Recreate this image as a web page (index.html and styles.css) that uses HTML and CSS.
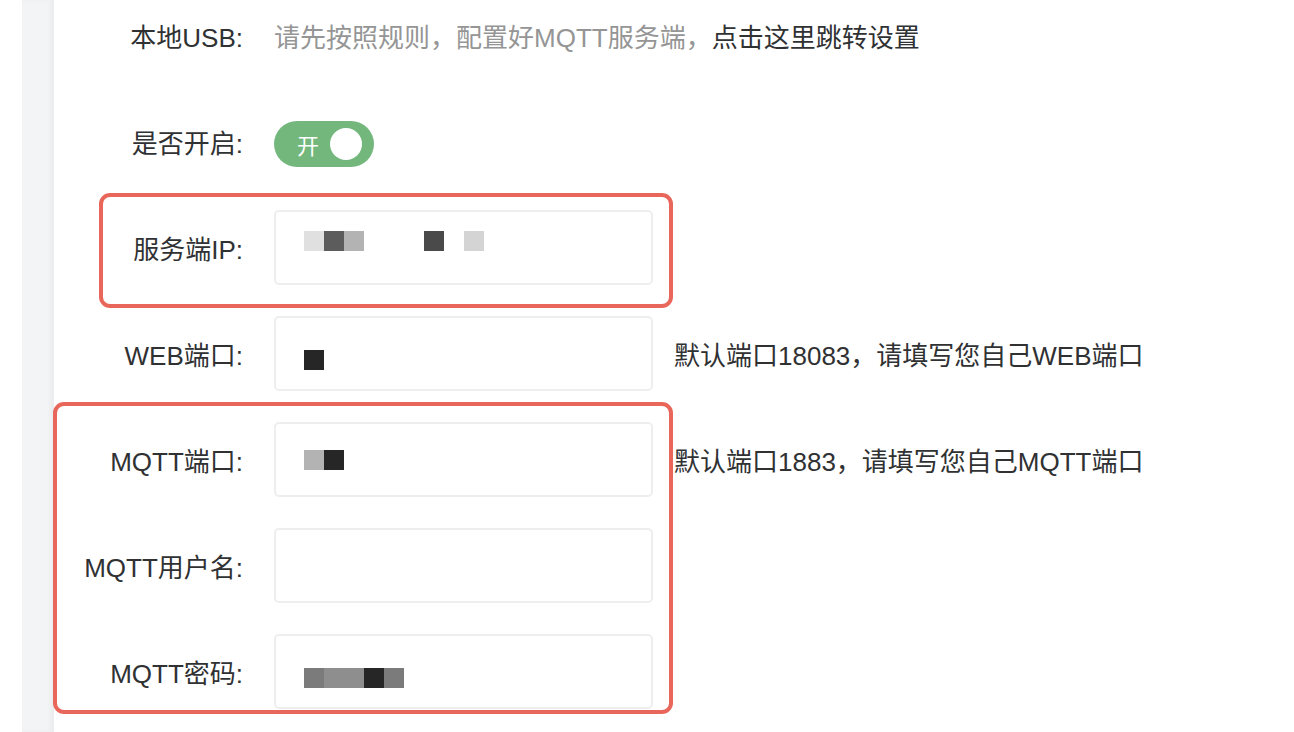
FILE: index.html
```html
<!DOCTYPE html>
<html lang="zh-CN">
<head>
    <meta charset="UTF-8">
    <meta name="viewport" content="width=device-width, initial-scale=1.0">
    <title>MQTT 设置</title>
    <link rel="stylesheet" href="styles.css">
</head>
<body>
    <div class="page">
        <div class="side"></div>
        <div class="form">
            <div class="row">
                <div class="label">本地USB:</div>
                <div class="value tip">请先按照规则，配置好MQTT服务端，<a class="jump" href="#">点击这里跳转设置</a></div>
            </div>
            <div class="row">
                <div class="label">是否开启:</div>
                <div class="value">
                    <div class="switch"><span>开</span><span class="knob"></span></div>
                </div>
            </div>
            <div class="row">
                <div class="label">服务端IP:</div>
                <div class="value">
                    <div class="field ip">
                        <span class="px c1"></span><span class="px c4"></span><span class="px c3"></span>
                        <span class="px c5 far"></span><span class="px c2 near"></span>
                    </div>
                </div>
            </div>
            <div class="row">
                <div class="label">WEB端口:</div>
                <div class="value">
                    <div class="field low"><span class="px c6"></span></div>
                </div>
                <div class="hint">默认端口18083，请填写您自己WEB端口</div>
            </div>
            <div class="row">
                <div class="label">MQTT端口:</div>
                <div class="value">
                    <div class="field"><span class="px c3"></span><span class="px c6"></span></div>
                </div>
                <div class="hint">默认端口1883，请填写您自己MQTT端口</div>
            </div>
            <div class="row">
                <div class="label">MQTT用户名:</div>
                <div class="value">
                    <div class="field"></div>
                </div>
            </div>
            <div class="row">
                <div class="label">MQTT密码:</div>
                <div class="value">
                    <div class="field low">
                        <span class="px c7"></span><span class="px c8"></span><span class="px c8"></span><span class="px c6"></span><span class="px c7"></span>
                    </div>
                </div>
            </div>
        </div>

        <!-- annotation boxes drawn over the form -->
        <div class="mark mark-ip"></div>
        <div class="mark mark-mqtt"></div>
    </div>
</body>
</html>
```

FILE: styles.css
```css
body {
    margin: 0;
    background-color: #ffffff;
    font-family: "Liberation Sans", "Noto Sans CJK SC", sans-serif;
    font-size: 26px;
    color: #303133;
}
.page {
    display: flex;
    position: relative;
    height: 732px;
    overflow: hidden;
}
.side {
    width: 32px;
    margin-left: 22px;
    flex-shrink: 0;
    background-color: #f3f4f6;
    box-shadow: inset -4px 0 4px rgba(0, 0, 0, 0.03);
}
.form {
    margin-top: -2px;
    display: flex;
    flex-direction: column;
    gap: 31px;
}
.row {
    display: flex;
    align-items: center;
    height: 75px;
}
.label {
    width: 189px;
    flex-shrink: 0;
    text-align: right;
    white-space: nowrap;
}
.value {
    margin-left: 31px;
    white-space: nowrap;
}
.tip {
    color: #959595;
}
.jump {
    color: #303133;
    text-decoration: none;
}
.switch {
    display: flex;
    align-items: center;
    gap: 11px;
    width: 100px;
    height: 46px;
    margin-top: 4px;
    padding-left: 23px;
    box-sizing: border-box;
    border-radius: 23px;
    background-color: #74b77c;
    color: #ffffff;
    font-size: 22px;
}
.knob {
    width: 32px;
    height: 32px;
    border-radius: 50%;
    background-color: #ffffff;
}
.field {
    display: flex;
    align-items: center;
    width: 379px;
    height: 75px;
    padding-left: 28px;
    box-sizing: border-box;
    border: 2px solid #eeeeee;
    border-radius: 5px;
    background-color: #ffffff;
}
.field.ip {
    padding-bottom: 14px;
}
.field.low {
    padding-top: 12px;
}
.px {
    width: 20px;
    height: 20px;
}
.px.far {
    margin-left: 60px;
}
.px.near {
    margin-left: 20px;
}
.c1 { background-color: #e0e0e0; }
.c2 { background-color: #d4d4d4; }
.c3 { background-color: #b3b3b3; }
.c4 { background-color: #5c5c5c; }
.c5 { background-color: #4a4a4a; }
.c6 { background-color: #262626; }
.c7 { background-color: #7b7b7b; }
.c8 { background-color: #8e8e8e; }
.hint {
    margin-left: 21px;
    white-space: nowrap;
}
.mark {
    position: absolute;
    border: 4px solid #e8675a;
    border-radius: 11px;
}
.mark-ip {
    left: 99px;
    top: 193px;
    width: 566px;
    height: 107px;
}
.mark-mqtt {
    left: 53px;
    top: 402px;
    width: 612px;
    height: 304px;
}
```
